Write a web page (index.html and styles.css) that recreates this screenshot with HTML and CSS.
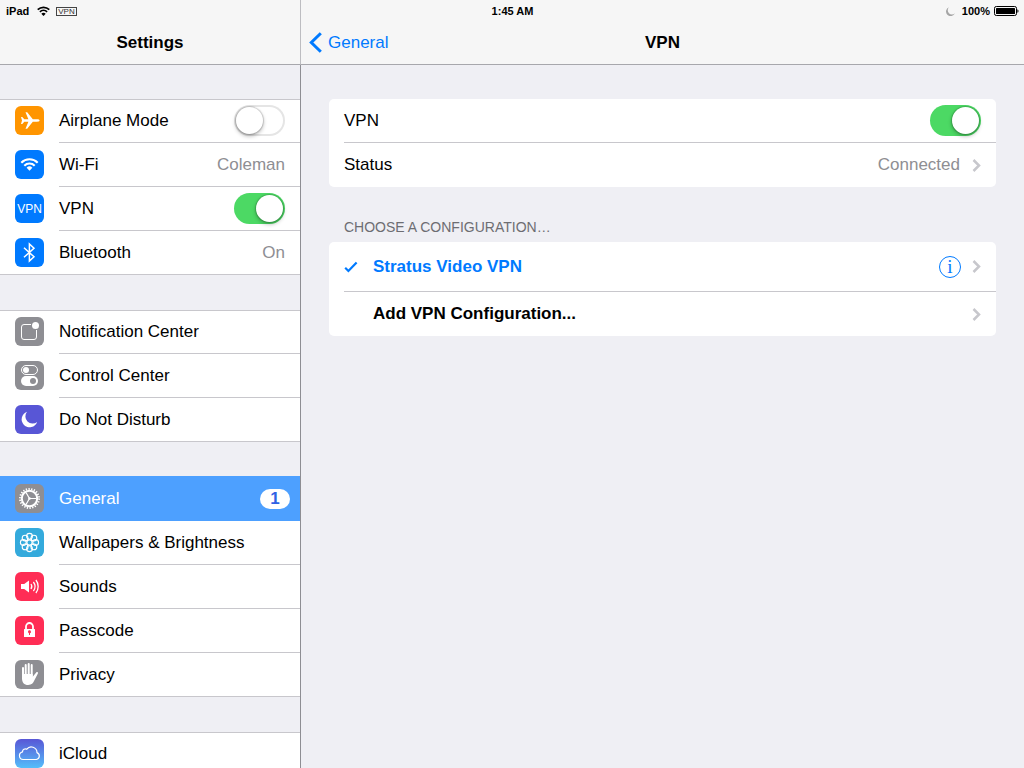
FILE: index.html
```html
<!DOCTYPE html>
<html lang="en">

<head>
    <meta charset="UTF-8">
    <meta name="viewport" content="width=device-width, initial-scale=1.0">
    <title>Settings</title>
    <link rel="stylesheet" href="styles.css">
</head>

<body>

    <!-- Status bar -->
    <div class="status-bar">
        <div class="status-left">
            <span>iPad</span>
            <svg class="status-wifi" width="13" height="10" viewBox="0 0 13 10" fill="none" stroke="#000" stroke-width="1.7">
                <path d="M0.7 3.6a8.4 8.4 0 0 1 11.6 0M2.9 5.9a5.2 5.2 0 0 1 7.2 0" />
                <path d="M6.5 10L4.3 7.7a3.2 3.2 0 0 1 4.4 0z" fill="#000" stroke="none" />
            </svg>
            <span class="vpn-tag">VPN</span>
        </div>
        <div class="status-time">1:45 AM</div>
        <div class="status-right">
            <svg width="9" height="9" viewBox="0 0 9 9">
                <path d="M3 0.2A4.6 4.6 0 1 0 8.9 6.2A4 4 0 0 1 3 0.2z" fill="#a5a5a5" />
            </svg>
            <span class="battery-text">100%</span>
            <svg width="25" height="10" viewBox="0 0 25 10">
                <rect x="0.5" y="0.5" width="22" height="9" rx="1.8" fill="none" stroke="#000" />
                <rect x="2" y="2" width="19" height="6" rx="0.6" />
                <path d="M23.4 3.2c1.5.5 1.5 3.1 0 3.6z" />
            </svg>
        </div>
    </div>

    <div class="split">

        <!-- Left column -->
        <aside class="sidebar">
            <header class="navbar">
                <h1 class="title">Settings</h1>
            </header>

            <nav class="menu">
                <ul class="group">
                    <li class="row">
                        <svg class="icon orange" viewBox="0 0 29 29" fill="#fff">
                            <path d="M24.6 14.5c0 .8-1.2 1.2-2.5 1.2h-4.3l-5.600 7.100h-1.700l2.900-7.100H9.300L7.300 18H6l1-3.500L6 11h1.300l2 2.300h4.100L10.500 6.200h1.700l5.600 7.100h4.300c1.300 0 2.500.4 2.500 1.200z" />
                        </svg>
                        <label class="row-body" for="airplane">Airplane Mode</label>
                        <input class="switch" type="checkbox" id="airplane">
                    </li>
                    <li>
                        <a class="row" href="#">
                            <svg class="icon blue" viewBox="0 0 29 29" fill="none" stroke="#fff" stroke-width="2.1">
                                <path d="M6.3 12.7a11.6 11.6 0 0 1 16.4 0M9.3 15.7a7.4 7.4 0 0 1 10.4 0" />
                                <path d="M14.5 20.7l-2.900-3a4.200 4.200 0 0 1 5.800 0z" fill="#fff" stroke="none" />
                            </svg>
                            <span class="row-body">Wi-Fi</span>
                            <span class="value">Coleman</span>
                        </a>
                    </li>
                    <li class="row">
                        <svg class="icon blue" viewBox="0 0 29 29">
                            <text class="icon-text" x="14.5" y="19" text-anchor="middle">VPN</text>
                        </svg>
                        <label class="row-body" for="vpn-side">VPN</label>
                        <input class="switch" type="checkbox" id="vpn-side" checked>
                    </li>
                    <li>
                        <a class="row" href="#">
                            <svg class="icon blue" viewBox="0 0 29 29" fill="none" stroke="#fff" stroke-width="1.5">
                                <path d="M9 9.7l10 9.100-4.600 4.300V5.900l4.600 4.300L9 19.300" />
                            </svg>
                            <span class="row-body">Bluetooth</span>
                            <span class="value">On</span>
                        </a>
                    </li>
                </ul>

                <ul class="group">
                    <li>
                        <a class="row" href="#">
                            <svg class="icon gray" viewBox="0 0 29 29" fill="none" stroke="#fff">
                                <path d="M16 7.5H9A2.500 2.500 0 0 0 6.500 10v10A2.500 2.500 0 0 0 9 22.500h10a2.500 2.500 0 0 0 2.500-2.500v-7" />
                                <circle cx="20.5" cy="8.5" r="3.5" fill="#fff" stroke="none" />
                            </svg>
                            <span class="row-body">Notification Center</span>
                        </a>
                    </li>
                    <li>
                        <a class="row" href="#">
                            <svg class="icon gray" viewBox="0 0 29 29" fill="#fff">
                                <rect x="6.5" y="4.5" width="16" height="9" rx="4.5" fill="none" stroke="#fff" />
                                <circle cx="11" cy="9" r="3" />
                                <rect x="6" y="15" width="17" height="10" rx="5" />
                                <circle cx="18" cy="20" r="3" fill="#8e8e93" />
                            </svg>
                            <span class="row-body">Control Center</span>
                        </a>
                    </li>
                    <li>
                        <a class="row" href="#">
                            <svg class="icon purple" viewBox="0 0 29 29" fill="#fff">
                                <path d="M12 6.7A8 8 0 1 0 22.200 16.900A7.250 7.250 0 0 1 12 6.700z" />
                            </svg>
                            <span class="row-body">Do Not Disturb</span>
                        </a>
                    </li>
                </ul>

                <ul class="group">
                    <li>
                        <a class="row selected" href="#">
                            <svg class="icon gray" viewBox="0 0 29 29" fill="none" stroke="#fff">
                                <circle cx="14.5" cy="14.5" r="9.5" stroke-width="2" stroke-dasharray="1.3 1.413" />
                                <circle cx="14.5" cy="14.5" r="7.7" stroke-width="2" />
                                <path d="M14.5 14.5h7M14.5 14.5l-3.500-6M14.500 14.500l-3.500 6" stroke-width="1.2" />
                                <circle cx="14.5" cy="14.5" r="1.3" fill="#fff" stroke="none" />
                            </svg>
                            <span class="row-body">General</span>
                            <span class="badge">1</span>
                        </a>
                    </li>
                    <li>
                        <a class="row" href="#">
                            <svg class="icon cyan" viewBox="0 0 29 29" fill="none" stroke="#fff" stroke-width="1.1">
                                <circle cx="14.5" cy="14.5" r="2.6" />
                                <circle cx="14.5" cy="8.3" r="2.9" />
                                <circle cx="18.9" cy="10.1" r="2.9" />
                                <circle cx="20.7" cy="14.5" r="2.9" />
                                <circle cx="18.9" cy="18.9" r="2.9" />
                                <circle cx="14.5" cy="20.7" r="2.9" />
                                <circle cx="10.1" cy="18.9" r="2.9" />
                                <circle cx="8.3" cy="14.5" r="2.9" />
                                <circle cx="10.1" cy="10.1" r="2.9" />
                            </svg>
                            <span class="row-body">Wallpapers &amp; Brightness</span>
                        </a>
                    </li>
                    <li>
                        <a class="row" href="#">
                            <svg class="icon red" viewBox="0 0 29 29" fill="none" stroke="#fff" stroke-width="1.3">
                                <path d="M6 12h3.2l4.800-3.600v12.200L9.200 17H6z" fill="#fff" stroke="none" />
                                <path d="M16 12a4.500 4.500 0 0 1 0 5M18.400 10a7.500 7.500 0 0 1 0 9M20.900 8a10.500 10.500 0 0 1 0 13" />
                            </svg>
                            <span class="row-body">Sounds</span>
                        </a>
                    </li>
                    <li>
                        <a class="row" href="#">
                            <svg class="icon red" viewBox="0 0 29 29" fill="#fff">
                                <path d="M11 13.5v-3a3.500 3.500 0 0 1 7 0v3" fill="none" stroke="#fff" stroke-width="1.8" />
                                <rect x="9" y="13" width="11" height="8" rx="0.5" />
                                <path d="M13 16a1.500 1.500 0 1 1 2 1.200V19h-1v-1.800A1.500 1.500 0 0 1 13 16z" fill="#ff2d55" />
                            </svg>
                            <span class="row-body">Passcode</span>
                        </a>
                    </li>
                    <li>
                        <a class="row" href="#">
                            <svg class="icon gray" viewBox="0 0 29 29" fill="none" stroke="#fff" stroke-width="2" stroke-linecap="round">
                                <path d="M8 8v9M10.700 5v11M13.700 4v11M16.700 5v11" />
                                <path d="M7 14h10.7v2.800l3.500-4.300c.8-.9 2.200-.2 1.700.9l-3.500 6.900c-1.300 2.800-2.700 4.700-6.200 4.700C9 25 7 22.300 7 18.500z" fill="#fff" stroke="none" />
                            </svg>
                            <span class="row-body">Privacy</span>
                        </a>
                    </li>
                </ul>

                <ul class="group">
                    <li>
                        <a class="row" href="#">
                            <svg class="icon cloud" viewBox="0 0 29 29" fill="none" stroke="#fff" stroke-width="1.2">
                                <path d="M8.2 20.5a3.900 3.900 0 0 1-.7-7.700a2.900 2.900 0 0 1 4.300-2.600a5.700 5.700 0 0 1 10.200 3.400a3.600 3.600 0 0 1-.6 6.900z" />
                            </svg>
                            <span class="row-body">iCloud</span>
                        </a>
                    </li>
                </ul>
            </nav>
        </aside>

        <!-- Right column -->
        <main class="detail">
            <header class="navbar">
                <a class="back" href="#">
                    <svg width="13" height="21" viewBox="0 0 13 21" fill="none" stroke="#007aff" stroke-width="3">
                        <path d="M11.8 1.200L2.300 10.500l9.500 9.300" />
                    </svg>
                    General
                </a>
                <h2 class="title">VPN</h2>
            </header>

            <div class="content">
                <ul class="card">
                    <li class="card-row">
                        <label class="card-label" for="vpn-main">VPN</label>
                        <input class="switch" type="checkbox" id="vpn-main" checked>
                    </li>
                    <li>
                        <a class="card-row" href="#">
                            <span class="card-label">Status</span>
                            <span class="card-value">Connected</span>
                            <svg class="chevron" viewBox="0 0 9 13"><path d="M1.500 1l5.500 5.500L1.500 12" /></svg>
                        </a>
                    </li>
                </ul>

                <h3 class="section-title">CHOOSE A CONFIGURATION…</h3>

                <ul class="card">
                    <li class="card-row tall">
                        <svg class="check" viewBox="0 0 14 12"><path d="M1.200 6.800l3.200 3.200L12.600 1.500" /></svg>
                        <a class="card-label config active" href="#">Stratus Video VPN</a>
                        <button class="info" type="button" aria-label="More info">i</button>
                        <svg class="chevron" viewBox="0 0 9 13"><path d="M1.500 1l5.500 5.500L1.500 12" /></svg>
                    </li>
                    <li>
                        <a class="card-row" href="#">
                            <span class="check"></span>
                            <span class="card-label config">Add VPN Configuration...</span>
                            <svg class="chevron" viewBox="0 0 9 13"><path d="M1.500 1l5.500 5.500L1.500 12" /></svg>
                        </a>
                    </li>
                </ul>
            </div>
        </main>

    </div>

</body>

</html>
```

FILE: styles.css
```css
* {
    box-sizing: border-box;
}

body {
    font-family: "Liberation Sans", Arial, Helvetica, sans-serif;
    font-size: 17px;
    margin: 0;
    color: #000;
    background-color: #efeff4;
    overflow: hidden;
}

h1,
h2,
h3,
ul {
    margin: 0;
    padding: 0;
}

ul {
    list-style: none;
}

a {
    color: inherit;
    text-decoration: none;
}

/* Status bar, sits on top of both navbars */
.status-bar {
    position: absolute;
    top: 0;
    left: 0;
    right: 0;
    height: 20px;
    padding: 0 5px 0 6px;
    display: grid;
    grid-template-columns: 1fr auto 1fr;
    align-items: center;
    font-size: 11px;
    font-weight: bold;
    line-height: 22px;
}

.status-left,
.status-right {
    display: flex;
    align-items: center;
}

.status-right {
    justify-content: flex-end;
}

.status-wifi {
    margin: 0 6px 0 8px;
}

.vpn-tag {
    height: 9px;
    padding: 0 1px;
    border: 1px solid #444;
    font-size: 8px;
    font-weight: normal;
    line-height: 8px;
    color: #333;
}

.battery-text {
    margin: 0 4px 0 7px;
}

/* Two columns */
.split {
    display: grid;
    grid-template-columns: 300px 1fr;
    height: 100vh;
}

.sidebar,
.detail {
    display: flex;
    flex-direction: column;
    min-height: 0;
    overflow: hidden;
}

.navbar {
    flex: none;
    height: 65px;
    padding: 21px 8px 0;
    display: grid;
    grid-template-columns: 1fr auto 1fr;
    align-items: center;
    background-color: #f6f6f6;
    border-bottom: 1px solid #a7a7ac;
}

.detail .navbar {
    border-left: 1px solid #bdbdc1;
}

.title {
    grid-column: 2;
    font-size: 17px;
    font-weight: bold;
}

.back {
    display: flex;
    align-items: center;
    gap: 6px;
    color: #007aff;
}

/* Sidebar */
.menu {
    padding-top: 34px;
}

.group {
    margin-bottom: 35px;
    background-color: #fff;
    box-shadow: inset 0 1px #c8c7cc;
}

.group > li:last-child {
    box-shadow: inset 0 -1px #c8c7cc;
}

.row {
    display: flex;
    align-items: center;
    height: 44px;
    padding: 0 15px 1px;
    background: linear-gradient(#c8c7cc, #c8c7cc) 59px 100% / 100% 1px no-repeat;
}

.row-body {
    flex: 1;
    margin-left: 15px;
}

.value {
    color: #8e8e93;
}

.selected {
    padding-right: 10px;
    color: #fff;
    background: #4da0ff;
    box-shadow: 0 -1px #4da0ff;
}

.badge {
    width: 30px;
    height: 20px;
    border-radius: 10px;
    background-color: #fff;
    color: #2f62e4;
    font-weight: bold;
    line-height: 20px;
    text-align: center;
}

.icon {
    flex: none;
    width: 29px;
    height: 29px;
    border-radius: 6px;
}

.icon-text {
    font-size: 12px;
    fill: #fff;
}

.orange {
    background-color: #ff9500;
}

.blue {
    background-color: #007aff;
}

.gray {
    background-color: #8e8e93;
}

.purple {
    background-color: #5856d6;
}

.cyan {
    background-color: #34aadc;
}

.red {
    background-color: #ff2d55;
}

.cloud {
    background: linear-gradient(#5856d6, #55befa);
}

/* Switch */
.switch {
    appearance: none;
    flex: none;
    display: flex;
    align-items: center;
    width: 51px;
    height: 31px;
    margin: 0;
    padding: 0 2px;
    border-radius: 16px;
    background-color: #fff;
    box-shadow: inset 0 0 0 2px #e5e5e5;
}

.switch::before {
    content: "";
    width: 27px;
    height: 27px;
    border-radius: 50%;
    background-color: #fff;
    box-shadow: 0 0 1px 1px rgba(0, 0, 0, 0.15), 0 2px 4px rgba(0, 0, 0, 0.3);
}

.switch:checked {
    justify-content: flex-end;
    background-color: #4cd964;
    box-shadow: none;
}

/* Detail */
.content {
    flex: 1;
    padding: 34px 28px;
    border-left: 1px solid #8e8e93;
}

.card {
    background-color: #fff;
    border-radius: 5px;
}

.card-row {
    display: flex;
    align-items: center;
    height: 44px;
    padding: 0 15px;
}

.card > li:first-child {
    padding-bottom: 1px;
    background: linear-gradient(#c8c7cc, #c8c7cc) 15px 100% / 100% 1px no-repeat;
}

.tall {
    height: 50px;
}

.card-label {
    flex: 1;
}

.config {
    margin-left: 15px;
    font-weight: bold;
}

.active {
    color: #007aff;
}

.card-value {
    margin-right: 12px;
    color: #8e8e93;
}

.chevron {
    width: 9px;
    height: 13px;
    fill: none;
    stroke: #c7c7cc;
    stroke-width: 2.5;
}

.check {
    width: 14px;
    height: 12px;
    fill: none;
    stroke: #007aff;
    stroke-width: 2.2;
}

.info {
    width: 22px;
    height: 22px;
    margin-right: 11px;
    padding: 0;
    border: 1px solid #007aff;
    border-radius: 50%;
    background: none;
    color: #007aff;
    font-family: "Liberation Serif", serif;
    font-size: 19px;
    line-height: 20px;
}

.section-title {
    padding: 32px 15px 7px;
    font-size: 14px;
    font-weight: normal;
    line-height: 16px;
    color: #6d6d72;
}
```
